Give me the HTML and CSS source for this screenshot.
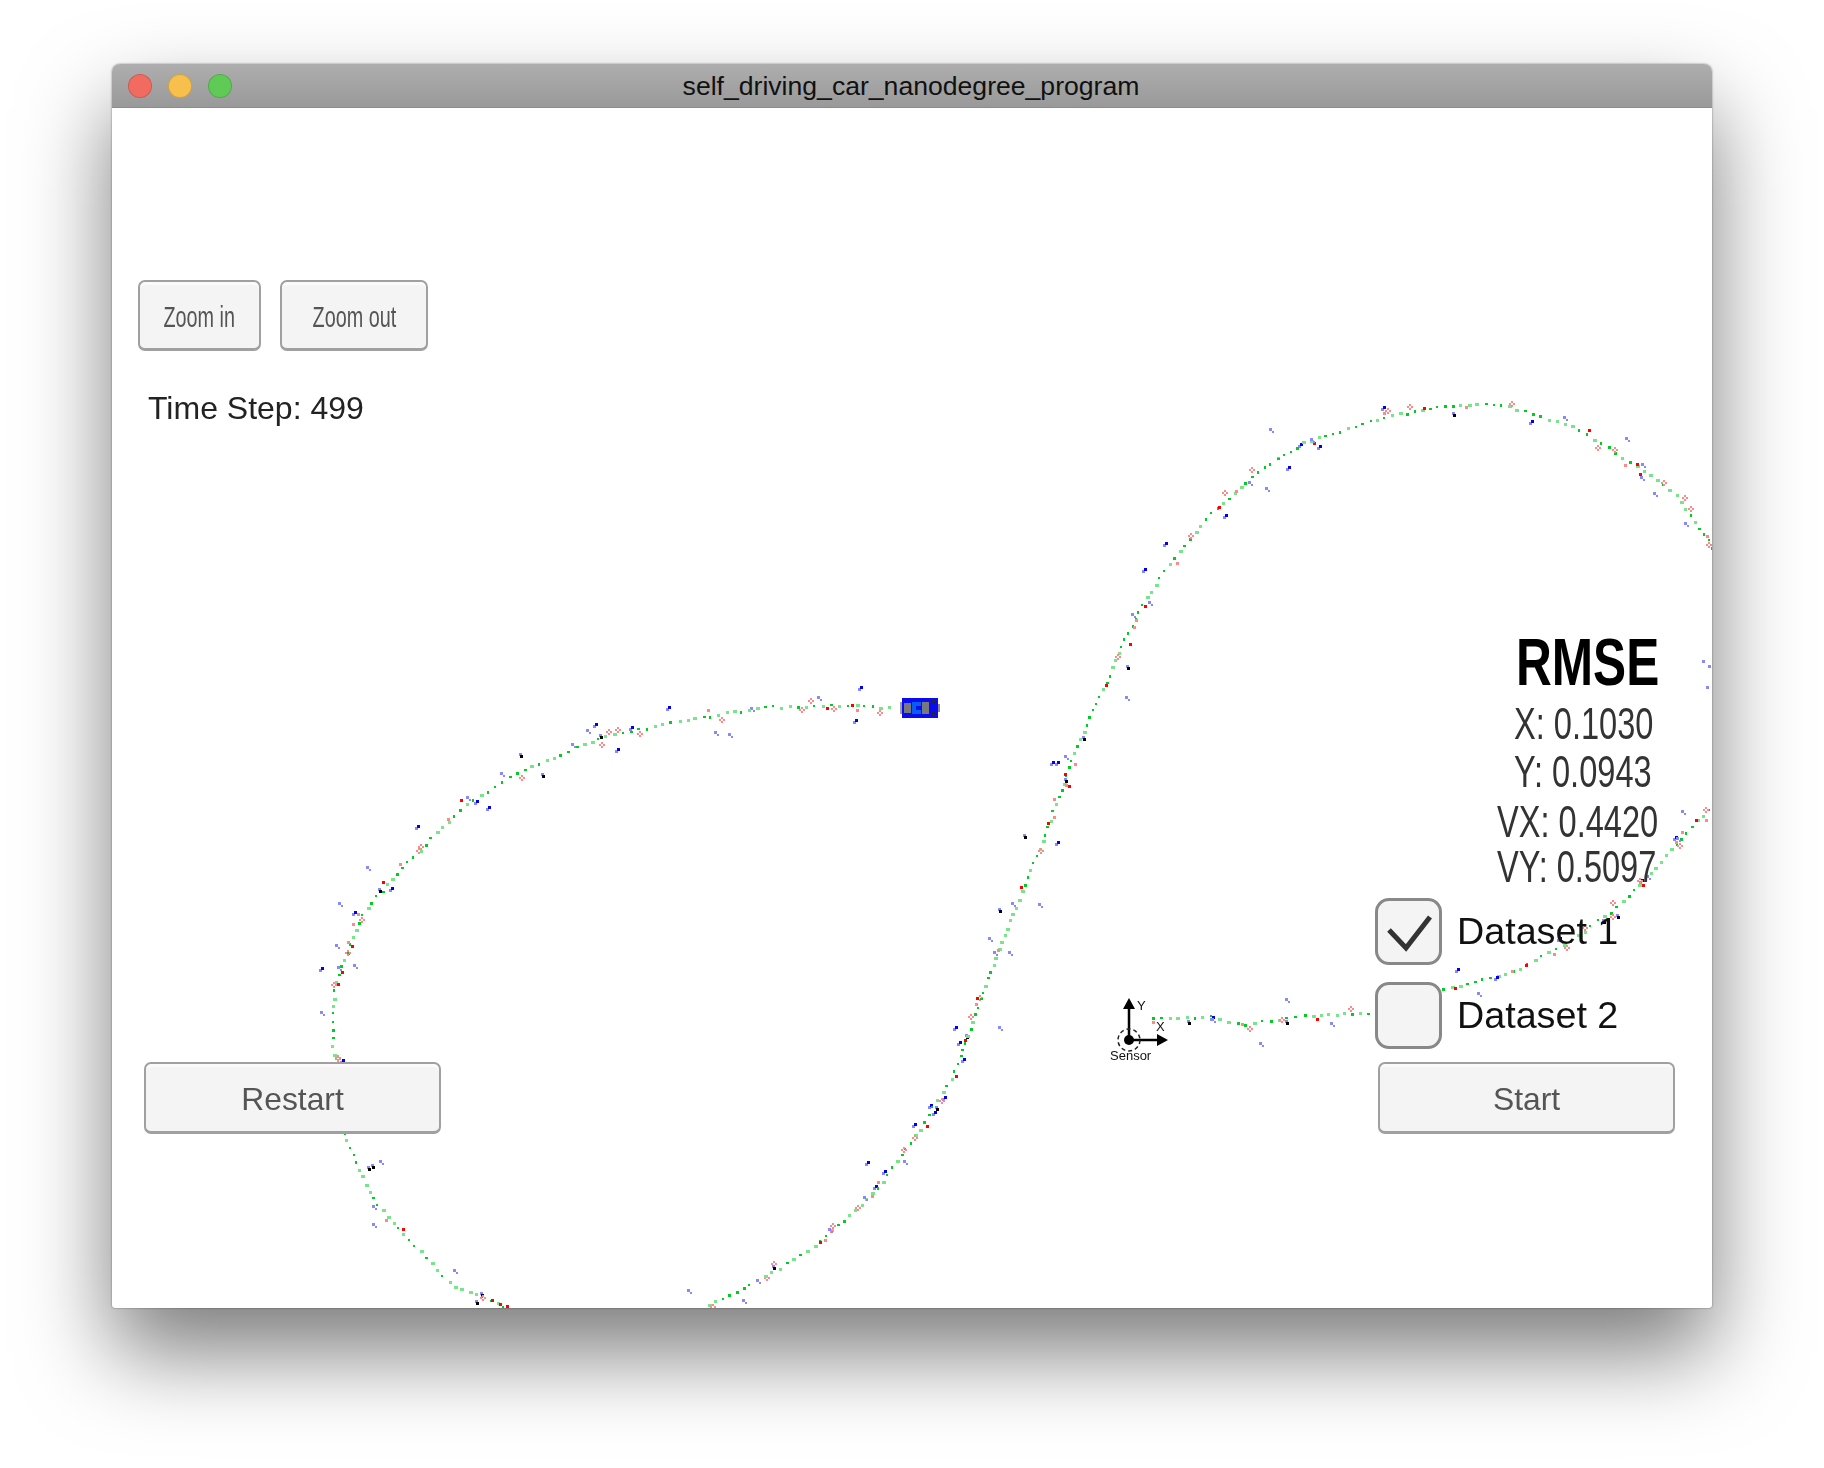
FILE: index.html
```html
<!DOCTYPE html>
<html lang="en">
<head>
    <meta charset="UTF-8">
    <title>self_driving_car_nanodegree_program</title>
    <link rel="stylesheet" href="styles.css">
</head>
<body>
    <div class="window">
        <div class="titlebar">
            <div class="lights">
                <span class="light light-red"></span>
                <span class="light light-yellow"></span>
                <span class="light light-green"></span>
            </div>
            <div class="title">self_driving_car_nanodegree_program</div>
        </div>

        <div class="content">
            <!-- trajectory dots, drawn by simulator.js -->
            <canvas id="plot" class="plot" width="1600" height="1200"></canvas>

            <!-- sensor axes -->
            <svg class="sensor" width="70" height="70" viewBox="0 0 70 70">
                <path class="axis" d="M19 5V42H52"/>
                <path class="arrow" d="M19 0l-6 11h12zM58 42l-11-6v12z"/>
                <circle class="axis-dot" cx="19" cy="42" r="5"/>
                <circle class="axis-ring" cx="19" cy="42" r="11"/>
                <text class="axis-label" x="27" y="12">Y</text>
                <text class="axis-label" x="46" y="33">X</text>
                <text class="axis-label" x="0" y="62">Sensor</text>
            </svg>

            <!-- the car -->
            <svg class="car" width="40" height="20" viewBox="0 0 40 20" shape-rendering="crispEdges">
                <rect x="2" y="0" width="36" height="20" fill="#0b0bf0"/>
                <rect x="38" y="6" width="2" height="8" fill="#8a8a9a"/>
                <rect x="0" y="4" width="2" height="12" fill="#9a9ab0"/>
                <rect x="4" y="5" width="7" height="10" fill="#77777f"/>
                <rect x="22" y="4" width="7" height="12" fill="#77777f"/>
                <rect x="12" y="4" width="9" height="12" fill="#0a5cf0"/>
                <rect x="16" y="8" width="5" height="4" fill="#0b0bf0"/>
                <rect x="32" y="2" width="3" height="3" fill="#222244"/>
                <rect x="32" y="14" width="3" height="3" fill="#222244"/>
            </svg>

            <div class="left-col">
                <div class="zoom-row">
                    <div class="btn btn-zoom-in"><span class="squeeze">Zoom in</span></div>
                    <div class="btn btn-zoom-out"><span class="squeeze">Zoom out</span></div>
                </div>
                <div class="time-step">Time Step: 499</div>
                <div class="btn btn-wide btn-restart">Restart</div>
            </div>

            <div class="right-col">
                <div class="rmse">
                    <div class="rmse-title"><span>RMSE</span></div>
                    <div class="rmse-line rmse-x"><span>X: 0.1030</span></div>
                    <div class="rmse-line rmse-y"><span>Y: 0.0943</span></div>
                    <div class="rmse-line rmse-vx"><span>VX: 0.4420</span></div>
                    <div class="rmse-line rmse-vy"><span>VY: 0.5097</span></div>
                </div>
                <div class="dataset">
                    <div class="checkbox">
                        <svg width="62" height="62" viewBox="0 0 62 62">
                            <path class="tick" d="M11 29L28 47L52 16"/>
                        </svg>
                    </div>
                    <div class="dataset-label">Dataset 1</div>
                </div>
                <div class="dataset">
                    <div class="checkbox"></div>
                    <div class="dataset-label">Dataset 2</div>
                </div>
                <div class="btn btn-wide btn-start">Start</div>
            </div>
        </div>
    </div>
    <script src="simulator.js"></script>
</body>
</html>
```

FILE: styles.css
```css
body {
    margin: 0;
    width: 1824px;
    height: 1468px;
    padding: 64px 0 0 112px;
    box-sizing: border-box;
    overflow: hidden;
    background-color: #fff;
    font-family: "Liberation Sans", Arial, sans-serif;
}

.window {
    width: 1600px;
    height: 1244px;
    border-radius: 8px 8px 3px 3px;
    overflow: hidden;
    background-color: #fff;
    box-shadow: 0 44px 88px rgba(0, 0, 0, 0.52), 0 0 2px rgba(0, 0, 0, 0.5);
}

.titlebar {
    position: relative;
    height: 44px;
    box-sizing: border-box;
    display: flex;
    align-items: center;
    justify-content: center;
    background: linear-gradient(#aeaeaf, #99999a);
    border-bottom: 1px solid #8c8c8c;
}

.lights {
    position: absolute;
    left: 16px;
    top: 10px;
    display: flex;
    gap: 16px;
}

.light {
    width: 24px;
    height: 24px;
    box-sizing: border-box;
    border-radius: 50%;
    border: 1px solid rgba(0, 0, 0, 0.15);
}

.light-red {
    background-color: #f16b60;
}

.light-yellow {
    background-color: #f7c04c;
}

.light-green {
    background-color: #5fcb56;
}

.title {
    padding-top: 2px;
    padding-right: 2px;
    font-size: 26.6px;
    color: #111;
}

.content {
    position: relative;
    height: 1200px;
    box-sizing: border-box;
    display: flex;
    justify-content: space-between;
    padding: 172px 37px 174px 26px;
}

.plot {
    position: absolute;
    left: 0;
    top: 0;
}

.sensor {
    position: absolute;
    left: 998px;
    top: 890px;
    overflow: visible;
}

.axis {
    fill: none;
    stroke: #000;
    stroke-width: 2.5;
}

.arrow,
.axis-dot {
    fill: #000;
}

.axis-ring {
    fill: none;
    stroke: #222;
    stroke-width: 1.5;
    stroke-dasharray: 4 3;
}

.axis-label {
    font-family: "Liberation Sans", Arial, sans-serif;
    font-size: 13px;
    fill: #111;
}

.car {
    position: absolute;
    left: 788px;
    top: 590px;
}

.left-col,
.right-col {
    position: relative;
    display: flex;
    flex-direction: column;
}

.right-col {
    width: 300px;
}

.zoom-row {
    display: flex;
    gap: 19px;
}

.btn {
    box-sizing: border-box;
    height: 71px;
    display: flex;
    align-items: center;
    justify-content: center;
    padding-top: 3px;
    background-color: #f4f4f4;
    border: 2px solid #a0a0a0;
    border-bottom-width: 3px;
    border-radius: 7px;
    box-shadow: inset 0 3px 0 #fafafa;
    color: #555;
    font-size: 31.8px;
}

.btn-zoom-in {
    width: 123px;
}

.btn-zoom-out {
    width: 148px;
}

.squeeze {
    display: inline-block;
    font-size: 30px;
    white-space: nowrap;
    transform: scaleX(0.66);
    filter: blur(0.4px);
}

.time-step {
    margin: 37px 0 0 10px;
    font-size: 32px;
    line-height: 40px;
    color: #222;
}

.btn-wide {
    width: 297px;
    height: 72px;
}

.btn-restart {
    margin: auto 0 0 6px;
}

.rmse {
    height: 266px;
    margin-top: 351px;
    white-space: nowrap;
}

.rmse span {
    display: inline-block;
    transform-origin: left center;
    filter: blur(0.7px);
}

.rmse-title {
    height: 70px;
    margin-left: 141px;
    font-size: 67px;
    line-height: 62px;
    font-weight: bold;
    color: #000;
}

.rmse-title span {
    transform: scaleX(0.74);
}

.rmse-line {
    font-size: 44px;
    line-height: 46px;
    color: #333;
}

.rmse-line span {
    transform: scaleX(0.74);
}

.rmse-x {
    margin-left: 139px;
}

.rmse-y {
    margin: 2px 0 0 139px;
}

.rmse-vx {
    margin: 4px 0 0 122px;
}

.rmse-vy {
    margin: -1px 0 0 122px;
}

.dataset {
    display: flex;
    align-items: center;
    gap: 15px;
    height: 68px;
    margin-bottom: 16px;
}

.checkbox {
    width: 67px;
    height: 67px;
    box-sizing: border-box;
    border: 3px solid #888;
    border-radius: 14px;
    background-color: #f4f4f4;
}

.tick {
    fill: none;
    stroke: #333;
    stroke-width: 5;
}

.dataset-label {
    font-size: 37.7px;
    color: #111;
}

.btn-start {
    margin: -3px 0 0 3px;
}
```

FILE: simulator.js
```js
// Waypoints of the three visible stretches of the track, in page pixels
const tracks = [
    [[1152,1018],[1210,1016],[1245,1024],[1303,1014],[1375,1012],[1443,989],[1512,971],[1570,940],[1629,896],[1675,843],[1712,803]],
    [[1712,547],[1675,494],[1629,460],[1571,425],[1500,403],[1443,405],[1384,416],[1303,442],[1256,471],[1210,512],[1163,570],[1134,617],[1105,681],[1076,745],[1047,826],[1024,884],[1000,942],[977,1006],[954,1070],[919,1128],[872,1193],[814,1245],[756,1280],[700,1308]],
    [[510,1308],[454,1286],[407,1239],[372,1198],[345,1140],[332,1053],[332,989],[361,913],[407,861],[465,803],[523,768],[605,735],[686,719],[756,707],[838,704],[896,707]]
];

// Stray radar hits out past the right edge of the first arc
const strays = [[1708,665],[1706,686],[1702,660]];

const ctx = document.getElementById('plot').getContext('2d');

// Small seeded generator so every load draws the same dots
let seed = 499;
function rnd() {
    seed = (seed * 16807) % 2147483647;
    return seed / 2147483647;
}

function noise(size) {
    return (rnd() - 0.5) * 2 * size;
}

function dot(x, y, color, w, h) {
    ctx.fillStyle = color;
    ctx.fillRect(Math.round(x - 112), Math.round(y - 108), w, h);
}

function diamond(x, y, color) {
    dot(x, y - 2, color, 2, 2);
    dot(x - 2, y, color, 2, 2);
    dot(x + 2, y, color, 2, 2);
    dot(x, y + 2, color, 2, 2);
}

function scatter(x, y) {
    // green estimate on the track
    const green = rnd() < 0.55;
    if (green) {
        dot(x + noise(1), y + noise(1), '#00cc22', 2 + Math.floor(rnd() * 2), 2 + Math.floor(rnd() * 2));
    } else {
        dot(x + noise(1), y + noise(1), '#77e688', 3 + Math.floor(rnd() * 2), 3);
    }

    // lidar in red, radar in blue, each a little off the track
    const r = rnd();
    if (r < 0.09) {
        dot(x + noise(5), y + noise(5), '#ff0000', 3, 3);
    } else if (r < 0.2) {
        diamond(x + noise(6), y + noise(6), '#ff8888');
    } else if (r < 0.3) {
        dot(x + noise(6), y + noise(6), '#ff8888', 3, 3);
    }

    const b = rnd();
    if (b < 0.12) {
        const bx = x + noise(20);
        const by = y + noise(20);
        dot(bx - 2, by + 2, '#8888ff', 3, 3);
        dot(bx, by, '#0000ee', 3, 3);
    } else if (b < 0.24) {
        const bx = x + noise(24);
        const by = y + noise(24);
        dot(bx, by, '#8888ff', 3, 3);
        dot(bx + 3, by + 3, '#8888ff', 2, 2);
    } else if (b < 0.28) {
        const bx = x + noise(16);
        const by = y + noise(16);
        dot(bx, by, '#8888ff', 3, 3);
        dot(bx + 1, by + 2, '#000', 3, 3);
    }
}

tracks.forEach(points => {
    for (let i = 0; i < points.length - 1; i++) {
        const [x0, y0] = points[i];
        const [x1, y1] = points[i + 1];
        const steps = Math.round(Math.hypot(x1 - x0, y1 - y0) / 8);
        for (let s = 0; s < steps; s++) {
            const t = s / steps;
            scatter(x0 + (x1 - x0) * t, y0 + (y1 - y0) * t);
        }
    }
});

strays.forEach(([x, y]) => dot(x, y, '#8888ff', 3, 3));
```
